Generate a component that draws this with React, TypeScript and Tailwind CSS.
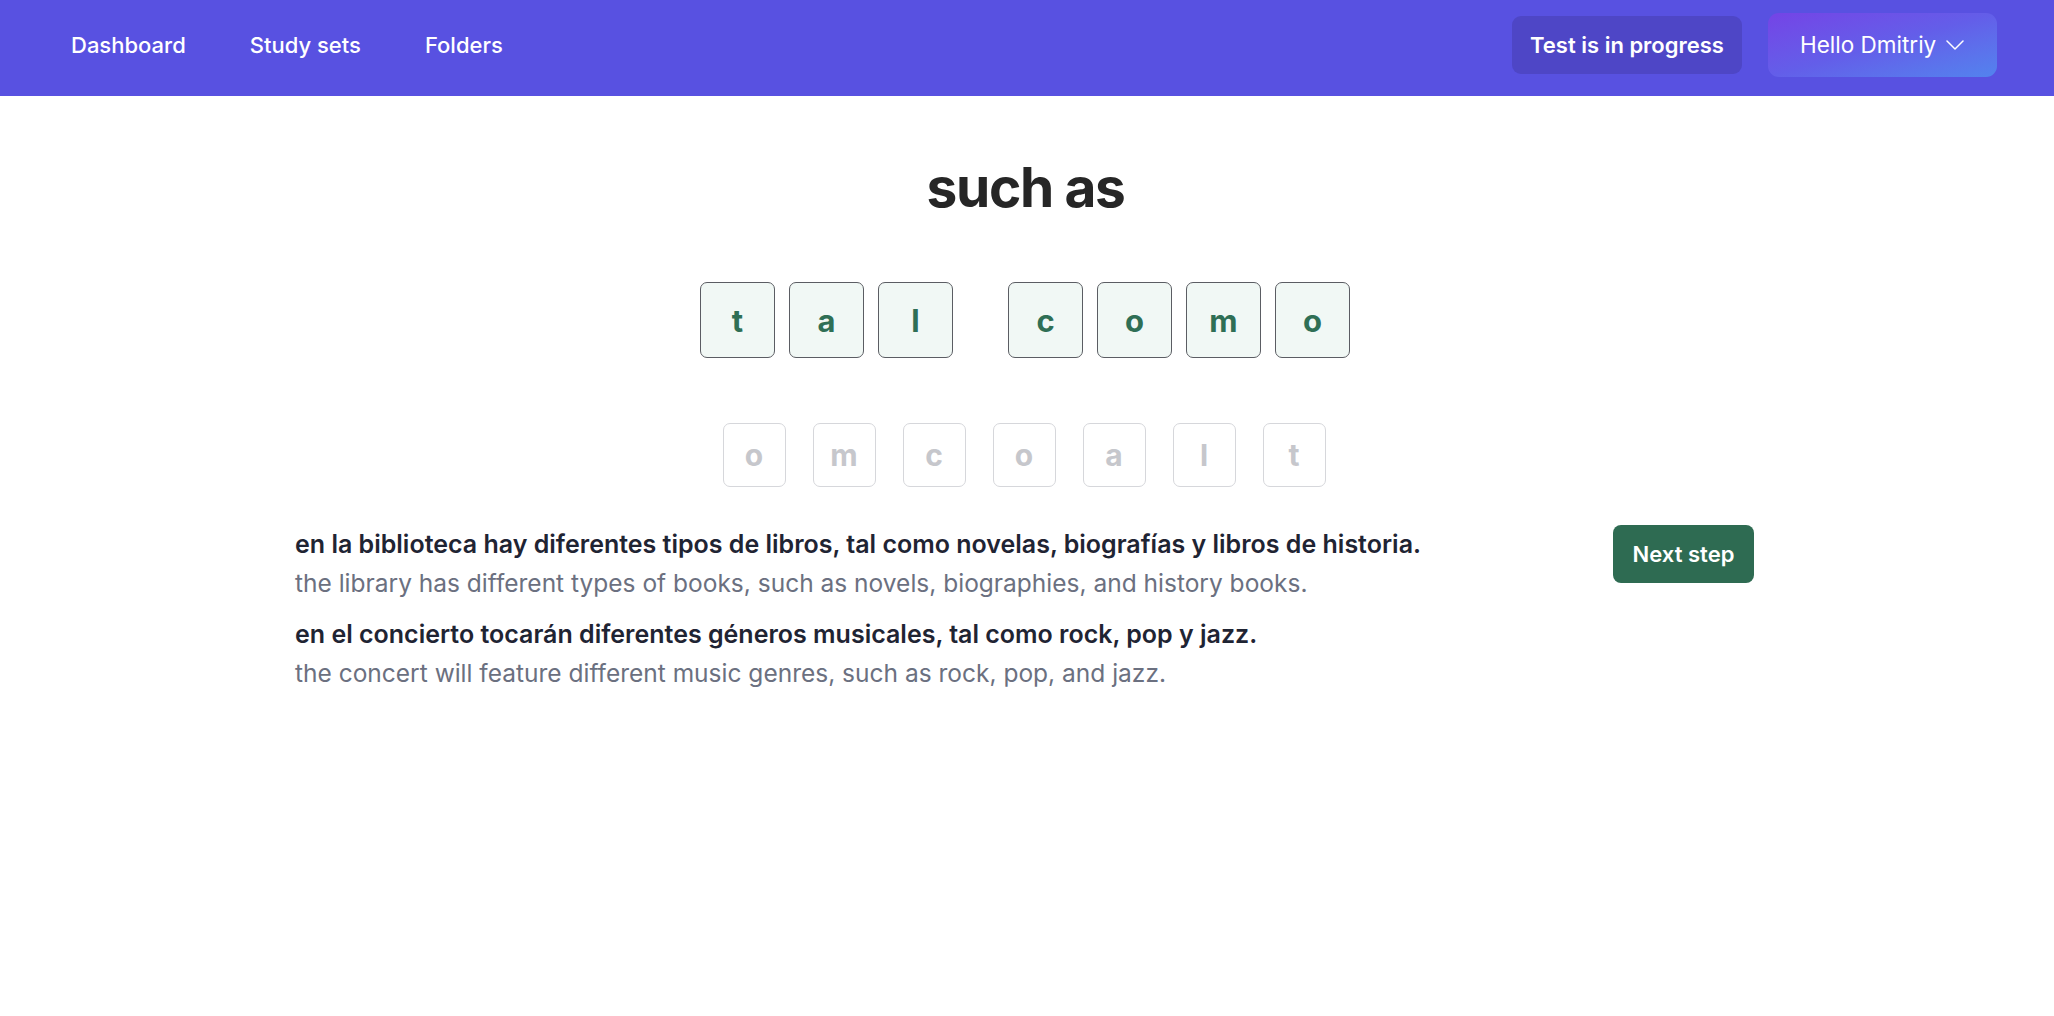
import React from "react";

const word1 = ["t", "a", "l"];
const word2 = ["c", "o", "m", "o"];
const pool = ["o", "m", "c", "o", "a", "l", "t"];

function FilledBox({ ch }: { ch: string }) {
  return (
    <div className="w-[75px] h-[76px] rounded-[7px] border border-[#5b5d63] bg-[#f1f8f5] flex items-center justify-center text-[31px] font-bold text-[#2f6f55] leading-none">
      {ch}
    </div>
  );
}

function PoolBox({ ch }: { ch: string }) {
  return (
    <div className="w-[63px] h-[64px] rounded-[7px] border border-[#d6d7db] bg-white flex items-center justify-center text-[30px] font-bold text-[#c6c7cc] leading-none">
      {ch}
    </div>
  );
}

export default function App() {
  return (
    <div className="min-h-screen bg-white font-['Inter',sans-serif]">
      <header className="h-[96px] bg-[#5851e1] flex items-center justify-between pl-[71px] pr-[57px] pb-[6px]">
        <nav className="flex items-center gap-[64px] text-[22px] font-medium text-white">
          <a>Dashboard</a>
          <a>Study sets</a>
          <a>Folders</a>
        </nav>
        <div className="flex items-center gap-[26px]">
          <div className="h-[58px] w-[230px] rounded-[9px] bg-[#4e46c6] flex items-center justify-center text-[22px] font-semibold text-white">
            Test is in progress
          </div>
          <div className="h-[64px] w-[229px] rounded-[11px] bg-gradient-to-br from-[#7443e6] via-[#635ee9] to-[#5283ee] flex items-center pl-[32px] gap-[10px] text-[22.5px] text-white">
            <span>Hello Dmitriy</span>
            <svg width="18" height="10" viewBox="0 0 18 10" fill="none">
              <path d="M1 1l8 8 8-8" stroke="white" strokeWidth="1.5" strokeLinecap="round" strokeLinejoin="round" />
            </svg>
          </div>
        </div>
      </header>

      <main className="flex flex-col items-center">
        <h1 className="mt-[61px] mr-[3px] h-[60px] flex items-center text-[55px] font-bold text-[#262626] tracking-tight leading-none">
          such as
        </h1>

        <div className="mt-[65px] mr-[4px] flex gap-[55px]">
          <div className="flex gap-[14px]">
            {word1.map((c, i) => (
              <FilledBox key={i} ch={c} />
            ))}
          </div>
          <div className="flex gap-[14px]">
            {word2.map((c, i) => (
              <FilledBox key={i} ch={c} />
            ))}
          </div>
        </div>

        <div className="mt-[65px] mr-[6px] flex gap-[27px]">
          {pool.map((c, i) => (
            <PoolBox key={i} ch={c} />
          ))}
        </div>

        <div className="mt-[38px] mr-[5px] w-[1459px] flex justify-between items-start">
          <div className="leading-[39px]">
            <div className="mb-[12px]">
              <p className="text-[25px] font-semibold text-[#1f2433]">
                en la biblioteca hay diferentes tipos de libros, tal como novelas, biografías y libros de historia.
              </p>
              <p className="text-[24.5px] text-[#6b7080]">
                the library has different types of books, such as novels, biographies, and history books.
              </p>
            </div>
            <div>
              <p className="text-[25px] font-semibold text-[#1f2433]">
                en el concierto tocarán diferentes géneros musicales, tal como rock, pop y jazz.
              </p>
              <p className="text-[24.5px] text-[#6b7080]">
                the concert will feature different music genres, such as rock, pop, and jazz.
              </p>
            </div>
          </div>
          <button className="h-[58px] w-[141px] rounded-[8px] bg-[#2e6b52] text-white text-[22px] font-semibold flex items-center justify-center">
            Next step
          </button>
        </div>
      </main>
    </div>
  );
}
